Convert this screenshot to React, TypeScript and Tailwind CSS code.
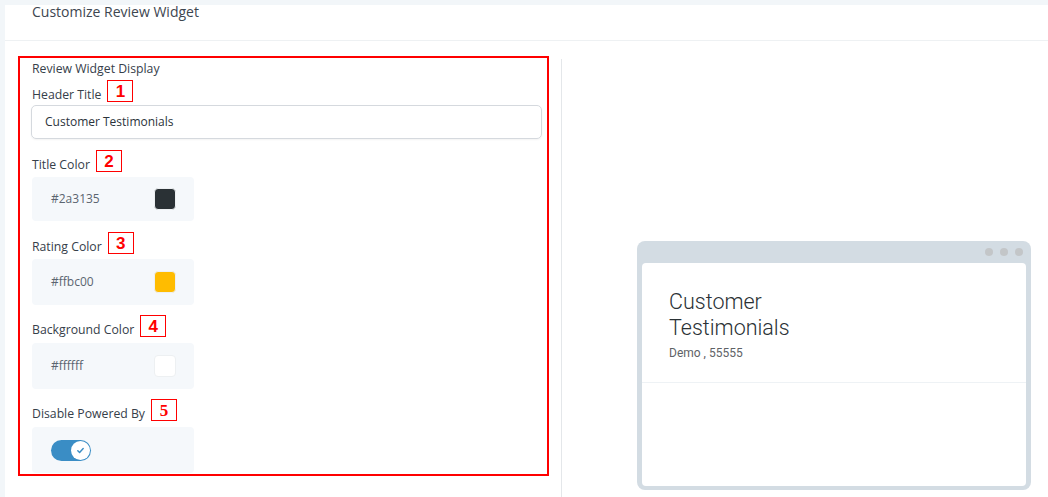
import React from "react";

const sans = { fontFamily: '"Open Sans", "Noto Sans", sans-serif' };

function Badge({ n, serif }: { n: number; serif?: boolean }) {
  return (
    <span
      className="ml-[6px] flex h-[22px] w-[26px] items-center justify-center border border-[#ff0000] text-[17px] font-bold leading-none text-[#ff0000]"
      style={{ fontFamily: serif ? '"Liberation Serif", serif' : '"Liberation Sans", Arial, sans-serif' }}
    >
      {n}
    </span>
  );
}

function FieldLabel({ label, n, serif }: { label: string; n: number; serif?: boolean }) {
  return (
    <div className="flex items-end">
      <span className="text-[12.25px] font-medium leading-[14px] text-[#36404a]">{label}</span>
      <Badge n={n} serif={serif} />
    </div>
  );
}

function ColorField({ value, swatch, tall }: { value: string; swatch: string; tall?: boolean }) {
  return (
    <div
      className={
        tall
          ? "flex h-[46px] w-[162px] items-center justify-between rounded bg-[#f5f8fb] pl-[19px] pr-[18px]"
          : "flex h-[44px] w-[162px] items-center justify-between rounded bg-[#f5f8fb] pl-[19px] pr-[18px]"
      }
    >
      <span className="text-[12px] text-[#5b6570]">{value}</span>
      <span
        className="h-[22px] w-[22px] rounded-[4px] border border-[#edf0f2]"
        style={{ backgroundColor: swatch }}
      />
    </div>
  );
}

export default function App() {
  return (
    <div className="min-h-screen bg-[#f2f6f9] pl-[5px] pt-[5px]" style={sans}>
      <div className="h-[492px] bg-white">
        {/* header */}
        <div className="h-[36px] border-b border-[#eef1f3] pl-[27px]">
          <h1 className="text-[14px] leading-[14px] text-[#3d4650]">Customize Review Widget</h1>
        </div>

        <div className="flex">
          {/* settings column */}
          <div className="w-[556px] pl-[13px] pt-[15px]">
            <div className="h-[420px] w-[531px] border-2 border-[#ff0000] pl-[12px] pt-[2px]">
              <p className="text-[12.25px] font-medium leading-[18px] text-[#36404a]">Review Widget Display</p>

              <div className="mt-[2px]">
                <FieldLabel label="Header Title" n={1} />
              </div>
              <div className="-ml-[1px] mt-[3px] flex h-[34px] w-[511px] items-center rounded-[5px] border border-[#d5d9de] px-[13px] text-[12px] text-[#2b333b] shadow-[0_1px_2px_rgba(0,0,0,0.05)]">
                Customer Testimonials
              </div>

              <div className="mt-[11px]">
                <FieldLabel label="Title Color" n={2} />
                <div className="mt-[5px]">
                  <ColorField value="#2a3135" swatch="#2a3135" />
                </div>
              </div>
              <div className="mt-[11px]">
                <FieldLabel label="Rating Color" n={3} />
                <div className="mt-[5px]">
                  <ColorField value="#ffbc00" swatch="#ffbc00" tall />
                </div>
              </div>
              <div className="mt-[10px]">
                <FieldLabel label="Background Color" n={4} />
                <div className="mt-[6px]">
                  <ColorField value="#ffffff" swatch="#ffffff" tall />
                </div>
              </div>
              <div className="mt-[10px]">
                <FieldLabel label="Disable Powered By" n={5} serif />
                <div className="mt-[6px] flex h-[46px] w-[162px] items-center rounded bg-[#f5f8fb] pl-[19px]">
                  <div className="flex h-[21px] w-[40px] items-center justify-end rounded-full bg-[#3a8dc5] pr-[1px]">
                    <div className="flex h-[19px] w-[19px] items-center justify-center rounded-full bg-white">
                      <svg width="9" height="9" viewBox="0 0 10 10" fill="none">
                        <path d="M2 5.2l2 2 4-4.4" stroke="#3a8dc5" strokeWidth="1.6" strokeLinecap="round" strokeLinejoin="round" />
                      </svg>
                    </div>
                  </div>
                </div>
              </div>
            </div>
          </div>

          {/* preview column */}
          <div className="mt-[18px] h-[440px] border-l border-[#e4e7ea] pl-[75px] pt-[182px]">
            <div className="w-[394px] rounded-[8px] bg-[#d3dce3] px-[5px] pb-[4px]">
              <div className="flex h-[22px] items-center justify-end gap-[7px] pr-[3px]">
                <span className="h-[8px] w-[8px] rounded-full bg-[#c3c6c8]" />
                <span className="h-[8px] w-[8px] rounded-full bg-[#c3c6c8]" />
                <span className="h-[8px] w-[8px] rounded-full bg-[#c3c6c8]" />
              </div>
              <div className="h-[223px] rounded-[4px] bg-white" style={{ fontFamily: "Roboto, sans-serif" }}>
                <div className="h-[120px] border-b border-[#eef2f5] pl-[27px] pt-[26px]">
                  <div className="w-[140px] text-[21.5px] font-light leading-[26px] text-[#2a3135]">
                    Customer Testimonials
                  </div>
                  <div className="mt-[3px] text-[12px] text-[#5e6266]">Demo , 55555</div>
                </div>
              </div>
            </div>
          </div>
        </div>
      </div>
    </div>
  );
}
